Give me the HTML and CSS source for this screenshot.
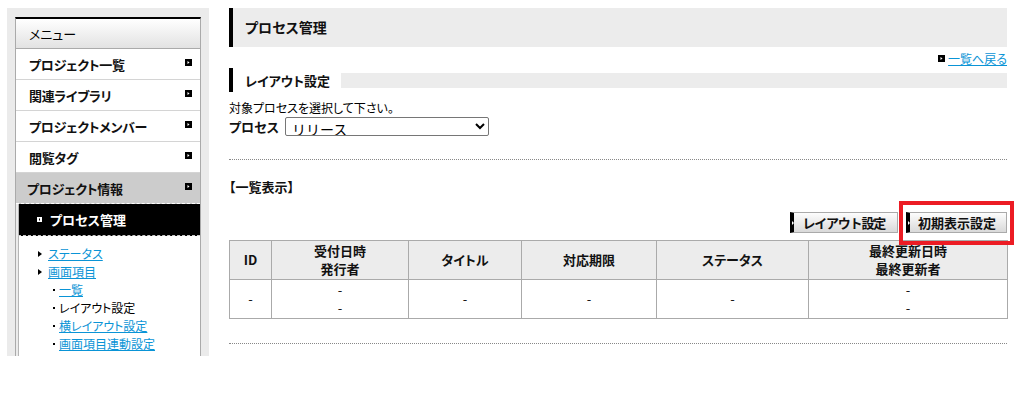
FILE: index.html
```html
<!DOCTYPE html>
<html lang="ja">
<head>
    <meta charset="UTF-8">
    <title>プロセス管理</title>
    <link rel="stylesheet" href="styles.css">
</head>
<body>
    <div class="layout">
        <aside class="side">
            <div class="menu">
                <div class="menu-head">メニュー</div>
                <ul class="menu-list">
                    <li class="menu-item">プロジェクト一覧<svg class="arr" width="7" height="7" viewBox="0 0 7 7"><rect width="7" height="7" fill="#000"/><path d="M2.5 2v3L4.5 3.5z" fill="#fff"/></svg></li>
                    <li class="menu-item">関連ライブラリ<svg class="arr" width="7" height="7" viewBox="0 0 7 7"><rect width="7" height="7" fill="#000"/><path d="M2.5 2v3L4.5 3.5z" fill="#fff"/></svg></li>
                    <li class="menu-item">プロジェクトメンバー<svg class="arr" width="7" height="7" viewBox="0 0 7 7"><rect width="7" height="7" fill="#000"/><path d="M2.5 2v3L4.5 3.5z" fill="#fff"/></svg></li>
                    <li class="menu-item">閲覧タグ<svg class="arr" width="7" height="7" viewBox="0 0 7 7"><rect width="7" height="7" fill="#000"/><path d="M2.5 2v3L4.5 3.5z" fill="#fff"/></svg></li>
                    <li class="menu-item open">プロジェクト情報<svg class="arr" width="7" height="7" viewBox="0 0 7 7"><rect width="7" height="7" fill="#000"/><path d="M2.5 2v3L4.5 3.5z" fill="#fff"/></svg></li>
                </ul>
                <div class="sub">
                    <div class="sub-current"><svg width="5" height="5" viewBox="0 0 5 5"><rect width="5" height="5" fill="#fff"/><rect x="2" y="1.5" width="1" height="2" fill="#000"/></svg>プロセス管理</div>
                    <ul class="sub-links">
                        <li><i class="tri"></i><a href="#">ステータス</a></li>
                        <li><i class="tri"></i><a href="#">画面項目</a></li>
                        <li class="dot"><i></i><a href="#">一覧</a></li>
                        <li class="dot"><i></i><span>レイアウト設定</span></li>
                        <li class="dot"><i></i><a href="#">横レイアウト設定</a></li>
                        <li class="dot"><i></i><a href="#">画面項目連動設定</a></li>
                    </ul>
                </div>
            </div>
        </aside>

        <main class="main">
            <h1 class="page-title">プロセス管理</h1>
            <div class="back">
                <svg width="7" height="7" viewBox="0 0 7 7"><rect width="7" height="7" fill="#000"/><path d="M2.5 2v3L4.5 3.5z" fill="#fff"/></svg>
                <a href="#">一覧へ戻る</a>
            </div>

            <h2 class="sec"><span>レイアウト設定</span><i></i></h2>
            <p class="note">対象プロセスを選択して下さい。</p>
            <div class="proc">
                <label for="proc">プロセス</label>
                <select id="proc">
                    <option>リリース</option>
                </select>
            </div>

            <hr class="dots">

            <h3 class="list-title">【一覧表示】</h3>
            <div class="btns">
                <button class="btn narrow">レイアウト設定</button>
                <button class="btn marked">初期表示設定</button>
            </div>

            <table class="list">
                <colgroup>
                    <col class="c-id"><col class="c-date"><col class="c-title"><col class="c-limit"><col class="c-status"><col class="c-upd">
                </colgroup>
                <thead>
                    <tr>
                        <th>ID</th>
                        <th>受付日時<br>発行者</th>
                        <th>タイトル</th>
                        <th>対応期限</th>
                        <th>ステータス</th>
                        <th>最終更新日時<br>最終更新者</th>
                    </tr>
                </thead>
                <tbody>
                    <tr>
                        <td>-</td>
                        <td>-<br>-</td>
                        <td>-</td>
                        <td>-</td>
                        <td>-</td>
                        <td>-<br>-</td>
                    </tr>
                </tbody>
            </table>

            <hr class="dots">
        </main>
    </div>
</body>
</html>
```

FILE: styles.css
```css
body {
    margin: 0;
    font-family: "Noto Sans CJK JP", "Liberation Sans", sans-serif;
    font-size: 13px;
    color: #000;
    font-feature-settings: "palt";
}

a {
    color: #0a94d6;
}

ul {
    list-style: none;
    margin: 0;
    padding: 0;
}

.layout {
    display: flex;
    align-items: flex-start;
    gap: 20px;
    padding: 8px 0 0 7px;
}

/* sidebar */
.side {
    width: 202px;
    height: 348px;
    box-sizing: border-box;
    padding: 9px 8px 0;
    background: #ebebeb;
    overflow: hidden;
}

.menu {
    height: 100%;
    box-sizing: border-box;
    background: #fff;
    border: 1px solid #aaa;
    border-top: 2px solid #000;
    border-bottom: 0;
}

.menu-head {
    height: 29px;
    line-height: 29px;
    padding-left: 13px;
    background: linear-gradient(#fff, #e2e2e2);
    border-bottom: 1px solid #aaa;
}

.menu-item {
    display: flex;
    align-items: center;
    justify-content: space-between;
    height: 30px;
    padding: 0 8px 0 13px;
    border-bottom: 1px solid #d4d4d4;
    font-weight: bold;
    color: #111;
    letter-spacing: -0.3px;
}

.menu-item .arr {
    margin-top: -4px;
}

.menu-item.open {
    background: #ccc;
    padding-left: 11px;
    border-bottom: 1px dashed #fff;
}

.sub {
    border-left: 2px solid #ebebeb;
}

.sub > * {
    border-left: 1px solid #b5b5b5;
}

.sub-current {
    display: flex;
    align-items: center;
    gap: 8px;
    height: 31px;
    padding-left: 18px;
    background: #000;
    color: #fff;
    font-weight: bold;
    border-bottom: 1px dashed #ccc;
}

.sub-links {
    padding: 9px 0 20px 19px;
    font-size: 12px;
    line-height: 18px;
}

.sub-links li {
    display: flex;
    align-items: center;
}

.tri {
    width: 0;
    height: 0;
    border-left: 4px solid #000;
    border-top: 3px solid transparent;
    border-bottom: 3px solid transparent;
    margin-right: 6px;
}

.dot {
    padding-left: 15px;
}

.dot i {
    width: 2px;
    height: 2px;
    background: #000;
    margin-right: 4px;
}

/* main */
.main {
    width: 778px;
}

.page-title {
    margin: 0;
    height: 39px;
    line-height: 39px;
    padding-left: 12px;
    border-left: 4px solid #000;
    background: #ececec;
    font-size: 14px;
    color: #111;
}

.back {
    display: flex;
    align-items: center;
    justify-content: flex-end;
    gap: 3px;
    height: 21px;
    padding-top: 1px;
    box-sizing: border-box;
    font-size: 12px;
}

.sec {
    display: flex;
    align-items: center;
    margin: 0;
    height: 24px;
    border-left: 4px solid #000;
    font-size: 13px;
    color: #111;
}

.sec span {
    padding: 0 11px 0 12px;
}

.sec i {
    flex: 1;
    height: 15px;
    background: #ececec;
}

.note {
    margin: 7px 0 0;
    font-size: 12px;
    line-height: 18px;
}

.proc {
    display: flex;
    align-items: center;
    gap: 6px;
    height: 18px;
}

.proc label {
    font-weight: bold;
    color: #111;
}

.proc select {
    width: 204px;
    height: 19px;
    padding: 0 2px;
    font-family: inherit;
    font-size: 14px;
    border: 1px solid #767676;
    border-radius: 2px;
    background: #fff;
    color: #000;
}

.dots {
    margin: 24px 0 0;
    border: 0;
    border-top: 1px dotted #888;
}

.list-title {
    margin: 18px 0 0;
    font-size: 13px;
    line-height: 18px;
    color: #111;
}

.btns {
    display: flex;
    justify-content: flex-end;
    gap: 8px;
    margin-top: 16px;
}

.btn {
    position: relative;
    height: 21px;
    padding: 0 10px 0 8px;
    border: 1px solid #aaa;
    border-left: 4px solid #000;
    background: linear-gradient(#fdfdfd, #d9d9d9);
    font-family: inherit;
    font-size: 13px;
    font-weight: bold;
    color: #111;
    line-height: 19px;
}

.btn.narrow {
    letter-spacing: -1.2px;
    padding-right: 12px;
}

.btn::before {
    content: "";
    position: absolute;
    left: -2px;
    top: 8px;
    border-left: 2px solid #fff;
    border-top: 2px solid transparent;
    border-bottom: 2px solid transparent;
}

.btn.marked::after {
    content: "";
    position: absolute;
    left: -11px;
    right: -8px;
    top: -12px;
    bottom: -13px;
    border: 4px solid #ec1c24;
}

.list {
    width: 778px;
    margin-top: 7px;
    table-layout: fixed;
    border-collapse: collapse;
}

.c-id { width: 42px; }
.c-date { width: 137px; }
.c-title { width: 113px; }
.c-limit { width: 135px; }
.c-status { width: 152px; }
.c-upd { width: 199px; }

.list th,
.list td {
    border: 1px solid #aaa;
    padding: 1px 0;
    height: 36px;
    line-height: 18px;
    text-align: center;
    color: #111;
}

.list th {
    background: #ececec;
}

.list td {
    font-size: 13px;
}
```
